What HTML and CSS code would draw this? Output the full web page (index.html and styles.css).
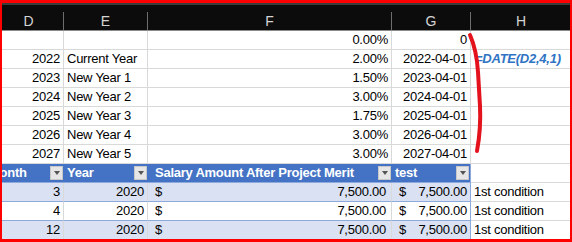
FILE: index.html
```html
<!DOCTYPE html>
<html>
<head>
<meta charset="utf-8">
<link rel="stylesheet" href="styles.css">
</head>
<body>
<div class="frame">
  <div class="sheet">
    <div class="colhead">
      <div class="ch">D</div><div class="ch">E</div><div class="ch">F</div><div class="ch">G</div><div class="ch">H</div>
    </div>
    <div class="row">
      <div class="cell r"></div><div class="cell"></div><div class="cell r">0.00%</div><div class="cell r">0</div><div class="cell"></div>
    </div>
    <div class="row">
      <div class="cell r">2022</div><div class="cell">Current Year</div><div class="cell r">2.00%</div><div class="cell r">2022-04-01</div><div class="cell formula">=DATE(D2,4,1)</div>
    </div>
    <div class="row">
      <div class="cell r">2023</div><div class="cell">New Year 1</div><div class="cell r">1.50%</div><div class="cell r">2023-04-01</div><div class="cell"></div>
    </div>
    <div class="row">
      <div class="cell r">2024</div><div class="cell">New Year 2</div><div class="cell r">3.00%</div><div class="cell r">2024-04-01</div><div class="cell"></div>
    </div>
    <div class="row">
      <div class="cell r">2025</div><div class="cell">New Year 3</div><div class="cell r">1.75%</div><div class="cell r">2025-04-01</div><div class="cell"></div>
    </div>
    <div class="row">
      <div class="cell r">2026</div><div class="cell">New Year 4</div><div class="cell r">3.00%</div><div class="cell r">2026-04-01</div><div class="cell"></div>
    </div>
    <div class="row">
      <div class="cell r">2027</div><div class="cell">New Year 5</div><div class="cell r">3.00%</div><div class="cell r">2027-04-01</div><div class="cell"></div>
    </div>
    <div class="row thead">
      <div class="cell th"><span class="month">Month</span><span class="filter"><i class="tri"></i></span></div>
      <div class="cell th"><span>Year</span><span class="filter"><i class="tri"></i></span></div>
      <div class="cell th"><span class="pad">Salary Amount After Project Merit</span><span class="filter"><i class="tri"></i></span></div>
      <div class="cell th"><span>test</span><span class="filter"><i class="tri"></i></span></div>
      <div class="cell"></div>
    </div>
    <div class="row band">
      <div class="cell r td">3</div><div class="cell r td">2020</div><div class="cell td money"><span class="dol">$</span><span>7,500.00</span></div><div class="cell td money tright"><span class="dol">$</span><span>7,500.00</span></div><div class="cell">1st condition</div>
    </div>
    <div class="row">
      <div class="cell r td">4</div><div class="cell r td">2020</div><div class="cell td money"><span class="dol">$</span><span>7,500.00</span></div><div class="cell td money tright"><span class="dol">$</span><span>7,500.00</span></div><div class="cell">1st condition</div>
    </div>
    <div class="row band">
      <div class="cell r td">12</div><div class="cell r td">2020</div><div class="cell td money"><span class="dol">$</span><span>7,500.00</span></div><div class="cell td money tright"><span class="dol">$</span><span>7,500.00</span></div><div class="cell">1st condition</div>
    </div>
  </div>
  <svg class="mark" width="572" height="242" viewBox="0 0 572 242">
    <path d="M470 35 C474 44 477 56 478 72 L480 106 C481 126 479 140 477 151" fill="none" stroke="#e3121c" stroke-width="4" stroke-linecap="round"/>
  </svg>
</div>
</body>
</html>
```
FILE: styles.css
```css
html, body {
  margin: 0;
  padding: 0;
  background: #ffffff;
}
.frame {
  position: relative;
  width: 572px;
  height: 242px;
  box-sizing: border-box;
  border-style: solid;
  border-color: #ff0000;
  border-width: 3px 2px 3px 2px;
  overflow: hidden;
  font-family: "Liberation Sans", Arial, sans-serif;
  font-size: 13px;
  letter-spacing: -0.25px;
  color: #000;
}
.sheet {
  margin-left: -8px;
  width: 578px;
}
.colhead {
  display: grid;
  grid-template-columns: 70px 84px 244px 79px 101px;
  background: #0c0c0c;
  border-top: 2px solid #3c3c3c;
  border-bottom: 1px solid #8a8a8a;
  padding-top: 7px;
}
.ch {
  height: 18px;
  line-height: 18px;
  text-align: center;
  color: #d4d4d4;
  font-size: 14px;
  letter-spacing: 0;
  border-right: 1px solid #6e6e6e;
  box-sizing: border-box;
}
.row {
  display: grid;
  grid-template-columns: 70px 84px 244px 79px 101px;
  height: 19px;
}
.cell {
  box-sizing: border-box;
  height: 19px;
  line-height: 18px;
  border-right: 1px solid #d9d9d9;
  border-bottom: 1px solid #d9d9d9;
  padding: 0 3px 0 3px;
  white-space: nowrap;
  overflow: hidden;
}
.r { text-align: right; }
.formula {
  color: #2f74c4;
  font-style: italic;
  font-weight: bold;
  padding-left: 4px;
}
.thead .th {
  background: #4472c4;
  color: #ffffff;
  font-weight: bold;
  display: flex;
  align-items: center;
  border-right: none;
  border-bottom: 1px solid #8ea9db;
  padding: 0 1px 0 3px;
}
.thead .th .pad { padding-left: 4px; }
.thead .th:nth-child(4) { border-right: 1px solid #8ea9db; }
.month { margin-left: -8px; }
.filter {
  margin-left: auto;
  width: 13px;
  height: 14px;
  box-sizing: border-box;
  background: #e6e6e6;
  border: 1px solid #c8c8c8;
  display: flex;
  align-items: center;
  justify-content: center;
}
.tri {
  width: 0;
  height: 0;
  border-left: 3.5px solid transparent;
  border-right: 3.5px solid transparent;
  border-top: 4px solid #555555;
}
.td {
  border-bottom: 1px solid #8ea9db;
}
.band .td { background: #d9e1f2; }
.tright { border-right: 1px solid #8ea9db; }
.money {
  display: flex;
  justify-content: space-between;
  padding-left: 7px;
  padding-right: 5px;
}
.tright.money { padding-left: 7px; padding-right: 3px; }
.mark {
  position: absolute;
  left: -2px;
  top: -3px;
  pointer-events: none;
}
```
